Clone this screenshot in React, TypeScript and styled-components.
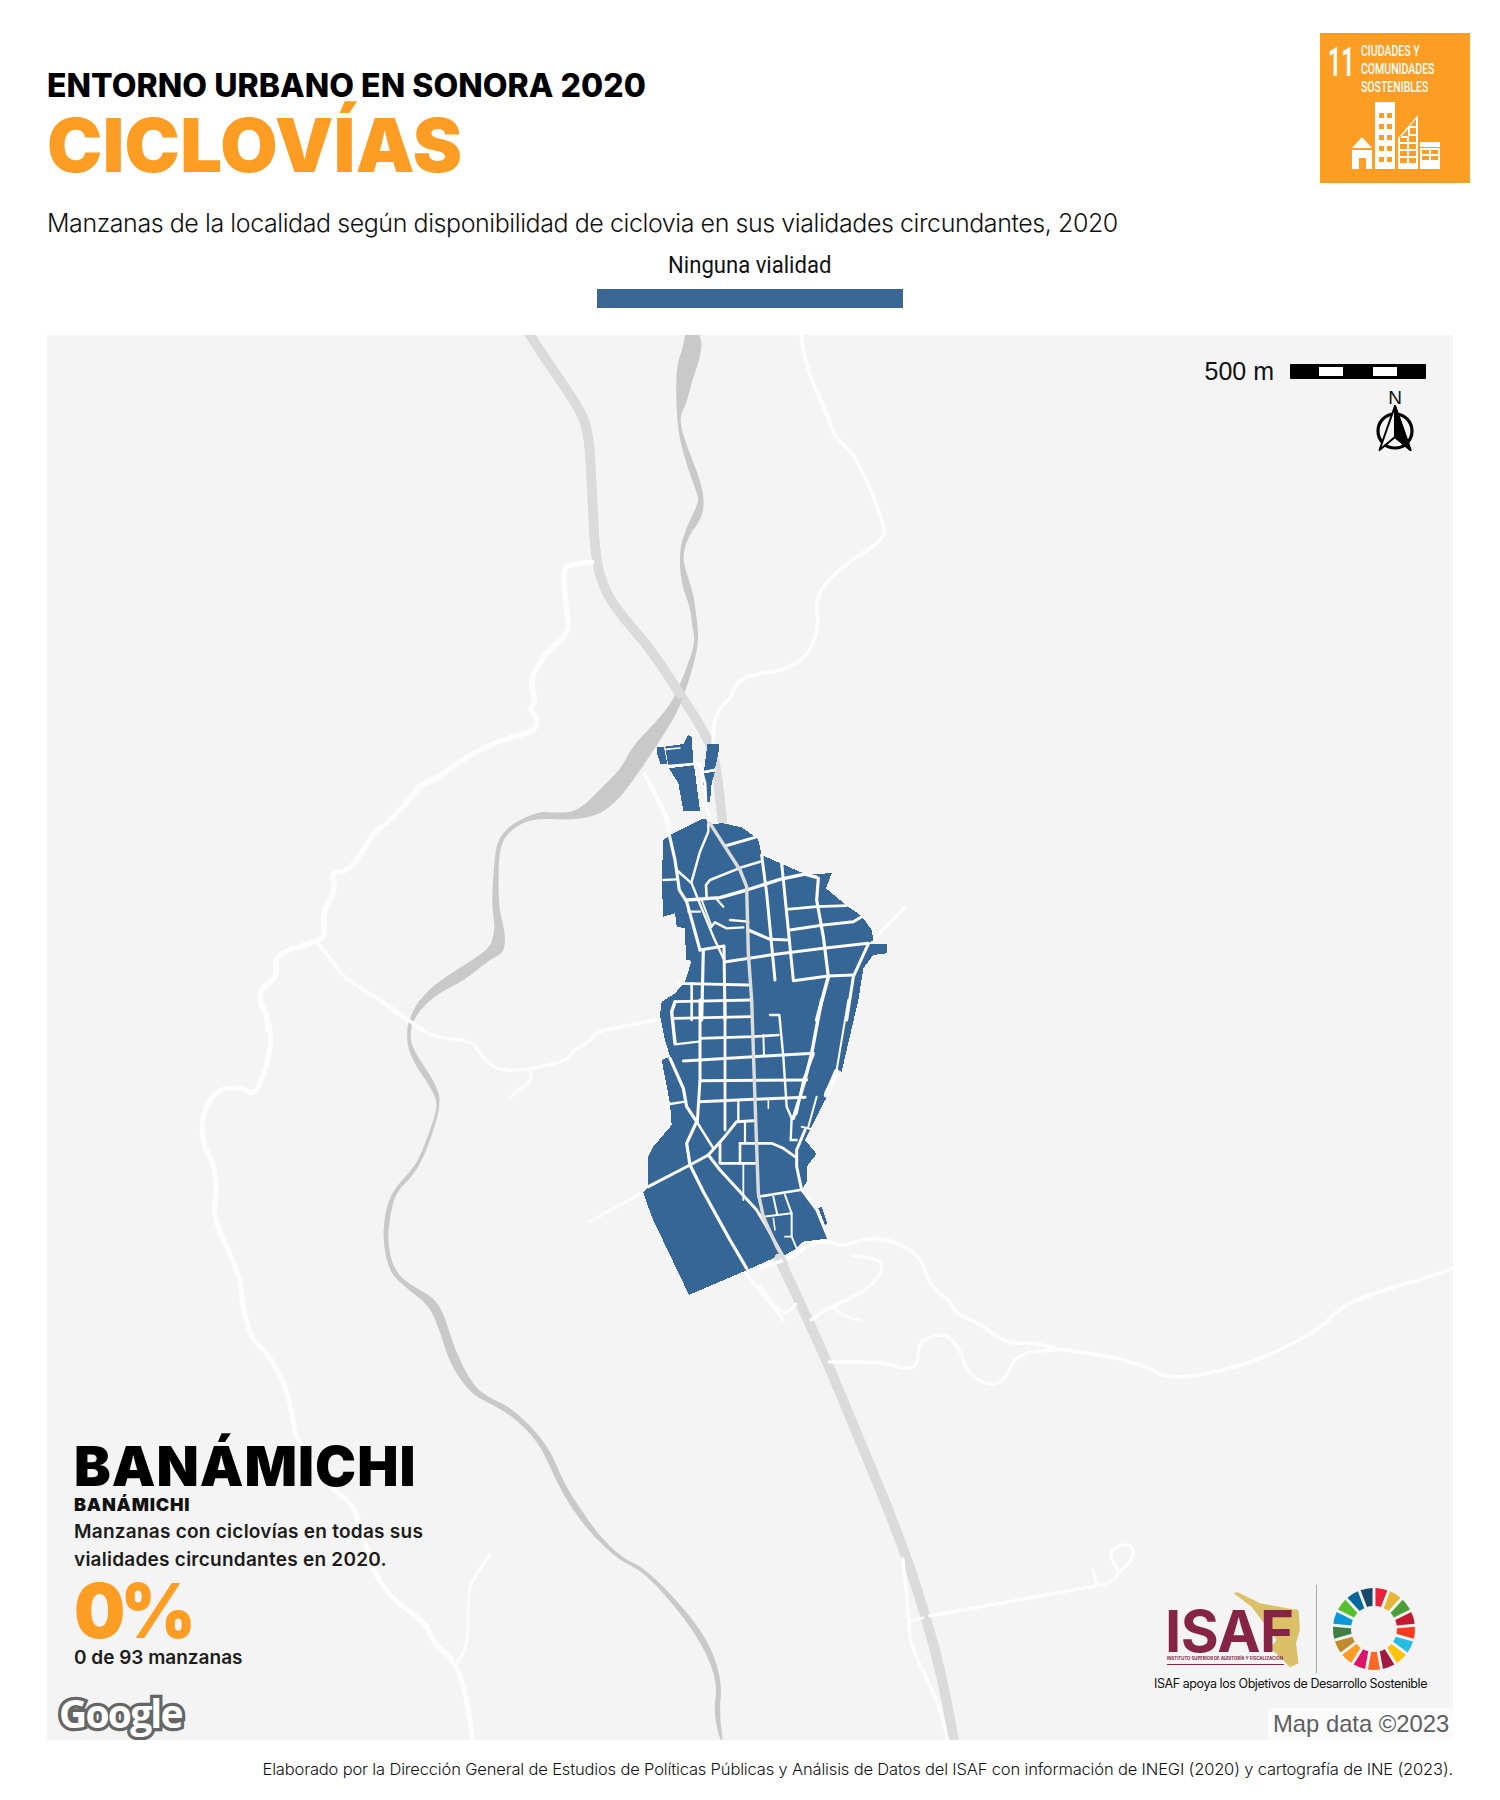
import React from "react";
import styled, { createGlobalStyle } from "styled-components";

const Global = createGlobalStyle`
  html, body { margin: 0; padding: 0; background: #fff; }
`;

const Page = styled.div`
  width: 1500px;
  height: 1800px;
  box-sizing: border-box;
  padding: 33px 0 0 47px;
  background: #fff;
  font-family: Inter, "Liberation Sans", sans-serif;
  color: #111;
  overflow: hidden;
`;
const Header = styled.header`
  display: flex;
  justify-content: space-between;
  align-items: flex-start;
  width: 1423px;
  height: 175px;
`;
const TitleBlock = styled.div`
  display: flex;
  flex-direction: column;
  padding-top: 33px;
`;
const Kicker = styled.h2`
  margin: 0;
  font-size: 32px;
  line-height: 40px;
  font-weight: 800;
  letter-spacing: 0.05px;
  color: #000;
`;
const Headline = styled.h1`
  margin: 0;
  font-size: 74px;
  line-height: 78px;
  font-weight: 900;
  letter-spacing: 0.35px;
  color: #fd9d24;
`;
const Badge = styled.div`
  width: 150px;
  height: 150px;
  background: #fd9d24;
  color: #fff;
  box-sizing: border-box;
  padding: 9px 0 0 8px;
  display: flex;
  flex-direction: column;
`;
const BadgeTop = styled.div`
  display: flex;
  gap: 11px;
  height: 56px;
`;
const BadgeNumber = styled.div`
  font-family: Roboto, sans-serif;
  font-weight: 700;
  font-size: 41px;
  line-height: 40px;
  width: 22px;
  transform-origin: left top;
  transform: scaleX(0.56);
`;
const BadgeWords = styled.div`
  font-family: Roboto, sans-serif;
  font-weight: 500;
  font-size: 15px;
  line-height: 18px;
  white-space: nowrap;
  transform-origin: left top;
  transform: scaleX(0.7);
`;
const BadgeIcon = styled.svg`
  display: block;
  width: 90px;
  height: 68px;
  margin: 3px 0 0 23px;
`;
const Subtitle = styled.p`
  margin: 0;
  font-size: 25px;
  line-height: 30px;
  font-weight: 300;
  letter-spacing: -0.43px;
  color: #111;
  height: 41px;
`;
const Legend = styled.div`
  width: 1406px;
  display: flex;
  flex-direction: column;
  align-items: center;
  height: 86px;
`;
const LegendLabel = styled.div`
  font-family: Roboto, sans-serif;
  font-size: 24px;
  line-height: 32px;
  font-weight: 400;
  color: #111;
  margin-bottom: 8px;
  transform: scaleX(0.92);
  white-space: nowrap;
`;
const LegendBar = styled.div`
  width: 306px;
  height: 19px;
  background: #3a6794;
`;
const MapPanel = styled.div`
  position: relative;
  width: 1406px;
  height: 1405px;
  background: #f4f4f4;
  overflow: hidden;
`;
const MapSvg = styled.svg`
  display: block;
  width: 1406px;
  height: 1405px;
`;
const Stroke = styled.path<{ $w: number; $c: string }>`
  fill: none;
  stroke: ${(p) => p.$c};
  stroke-width: ${(p) => p.$w}px;
  stroke-linecap: round;
  stroke-linejoin: round;
  vector-effect: non-scaling-stroke;
`;
const Area = styled.path<{ $c: string; $crisp?: boolean }>`
  fill: ${(p) => p.$c};
  shape-rendering: ${(p) => (p.$crisp ? "crispEdges" : "auto")};
`;
const ScaleBlock = styled.div`
  position: absolute;
  top: 22px;
  right: 27px;
  display: flex;
  flex-direction: column;
  align-items: flex-end;
`;
const ScaleRow = styled.div`
  display: flex;
  align-items: center;
  gap: 16px;
`;
const ScaleText = styled.span`
  font-family: "Liberation Sans", Arial, sans-serif;
  font-size: 25px;
  line-height: 28px;
  color: #111;
`;
const ScaleBar = styled.div`
  width: 136px;
  height: 15px;
  background: #000;
  border-radius: 1px;
  box-sizing: border-box;
  display: flex;
  align-items: center;
  padding-left: 29px;
  gap: 30px;
`;
const ScaleGap = styled.span`
  width: 24px;
  height: 9px;
  background: #fff;
`;
const NorthArrow = styled.div`
  margin: 6px 11px 0 0;
  width: 40px;
  display: flex;
  flex-direction: column;
  align-items: center;
`;
const NorthLetter = styled.span`
  font-family: "Liberation Sans", Arial, sans-serif;
  font-size: 19px;
  line-height: 14px;
  color: #111;
`;
const Locality = styled.div`
  position: absolute;
  left: 27px;
  top: 1100px;
  display: flex;
  flex-direction: column;
`;
const LocalityBig = styled.div`
  font-size: 55px;
  line-height: 62px;
  font-weight: 900;
  color: #000;
  letter-spacing: 1px;
`;
const LocalitySmall = styled.div`
  font-size: 18px;
  line-height: 20px;
  font-weight: 900;
  color: #111;
  margin-top: -2px;
  letter-spacing: 0.8px;
`;
const LocalityDesc = styled.div`
  font-size: 19px;
  line-height: 28px;
  font-weight: 600;
  color: #1c1c1c;
  width: 380px;
  margin-top: 3px;
  letter-spacing: 0.25px;
`;
const Percent = styled.div`
  font-size: 76px;
  line-height: 72px;
  font-weight: 900;
  color: #fd9d24;
  letter-spacing: -5px;
  transform-origin: left center;
  transform: scaleX(0.95);
`;
const LocalityCount = styled.div`
  font-size: 19px;
  line-height: 24px;
  font-weight: 600;
  color: #1c1c1c;
`;
const GoogleMark = styled.div`
  position: absolute;
  left: 12px;
  bottom: 5px;
  font-family: "Open Sans", sans-serif;
  font-weight: 700;
  font-size: 39px;
  line-height: 44px;
  letter-spacing: -1.8px;
  color: #fff;
  -webkit-text-stroke: 6.5px #666;
  paint-order: stroke fill;
`;
const MapData = styled.div`
  position: absolute;
  right: 0;
  bottom: 0;
  width: 185px;
  height: 32px;
  box-sizing: border-box;
  padding-left: 5px;
  background: #fbfbfb;
  font-family: "Liberation Sans", Arial, sans-serif;
  font-size: 23.8px;
  line-height: 32px;
  color: #5e5e5e;
  white-space: nowrap;
`;
const LogoBlock = styled.div`
  position: absolute;
  left: 1107px;
  top: 1250px;
  width: 280px;
  display: flex;
  flex-direction: column;
`;
const LogoRow = styled.div`
  display: flex;
  align-items: flex-start;
  height: 88px;
`;
const IsafMark = styled.div`
  position: relative;
  width: 149px;
  height: 88px;
  padding-left: 11px;
  box-sizing: border-box;
`;
const IsafState = styled.svg`
  position: absolute;
  left: 0;
  top: 0;
  width: 149px;
  height: 88px;
`;
const IsafName = styled.div`
  position: relative;
  font-family: Inter, sans-serif;
  font-size: 58px;
  line-height: 42px;
  margin-top: 25px;
  font-weight: 700;
  letter-spacing: -0.6px;
  color: #862445;
`;
const IsafFull = styled.div`
  position: relative;
  font-size: 4.3px;
  line-height: 6px;
  margin: 4px 0 0 2px;
  width: 117px;
  font-weight: 700;
  white-space: nowrap;
  color: #862445;
  border-bottom: 1px solid #862445;
  padding-bottom: 2px;
`;
const LogoDivider = styled.div`
  width: 1px;
  height: 88px;
  background: #aaa;
  margin: 0 15px 0 13px;
`;
const Wheel = styled.svg`
  width: 84px;
  height: 84px;
  margin-top: 2px;
`;
const LogoCaption = styled.div`
  font-size: 12.5px;
  line-height: 18px;
  font-weight: 400;
  letter-spacing: -0.43px;
  margin-top: 2px;
  color: #111;
  white-space: nowrap;
`;
const Footer = styled.footer`
  width: 1406px;
  text-align: right;
  font-size: 16.5px;
  line-height: 20px;
  margin-top: 19px;
  font-weight: 300;
  letter-spacing: -0.16px;
  color: #111;
  white-space: nowrap;
`;

type P = [number, number];
const parse = (s: string): P[] =>
  s.trim().split(/\s+/).map((t) => t.split(",").map(Number) as P);
const line = (s: string) =>
  parse(s).map((p, i) => `${i ? "L" : "M"}${p[0]} ${p[1]}`).join(" ");
const poly = (s: string) => line(s) + " Z";
const smooth = (s: string) => {
  const p = parse(s);
  let d = `M${p[0][0]} ${p[0][1]}`;
  for (let i = 1; i < p.length - 1; i++) {
    const mx = (p[i][0] + p[i + 1][0]) / 2;
    const my = (p[i][1] + p[i + 1][1]) / 2;
    d += ` Q${p[i][0]} ${p[i][1]} ${mx} ${my}`;
  }
  const l = p[p.length - 1];
  return d + ` L${l[0]} ${l[1]}`;
};

const ROAD = "#fdfdfd";
const TOWN_ROAD = "#fbfbfb";
const HWY = "#dbdbdb";
const RIVER = "#c9c9c9";
const BLUE = "#366695";

const riverUpper =
  "1087,10 1082,40 1070,70 1066,120 1068,190 1074,245 1093,310 1113,365 1118,385 1090,440 1073,495 1078,570 1098,620 1102,660 1110,700 1085,770 1060,830 1020,880 970,930 945,980 905,1020 848,1078 800,1082 760,1078 700,1105 672,1135 661,1165 653,1285 660,1330 658,1355 648,1388 540,1455 500,1490 470,1540 463,1568 470,1568 480,1540 510,1505 545,1480 590,1458 650,1410 682,1395 684,1350 670,1300 668,1220 672,1155 695,1120 745,1093 820,1098 885,1090 930,1060 970,1010 1040,905 1075,845 1100,770 1118,700 1112,640 1105,590 1085,530 1082,500 1095,460 1125,420 1130,375 1115,320 1090,260 1072,198 1090,165 1100,120 1118,70 1125,30 1118,10";
const riverLower =
  "492,0 470,30 461,85 478,130 515,180 533,215 522,255 492,330 470,360 430,400 413,450 410,510 425,570 465,605 515,640 540,700 560,760 600,815 630,835 695,865 760,925 795,1000 830,1060 880,1120 940,1172 1000,1198 1110,1320 1160,1420 1150,1490 1165,1548 1172,1548 1163,1490 1170,1420 1130,1320 1005,1192 945,1166 890,1115 850,1060 815,1010 780,930 700,852 635,826 605,795 570,730 548,660 525,622 470,595 435,565 420,510 425,450 440,400 480,365 510,310 542,215 525,170 485,115 470,85 475,45 510,0";

const upperRoads: [string, number][] = [
  ["878,520 830,525 813,535 820,620 828,680 780,715 745,770 742,795 752,835 735,848 758,870 750,900 670,918 590,960 530,1005 490,1020 480,1040 420,1105 390,1125 370,1160 335,1210 300,1215 295,1225 305,1255 275,1300 280,1360 262,1370 165,1397 175,1450 135,1475 135,1510 150,1535 152,1568", 5.2],
  ["262,1372 295,1410 320,1450 420,1510 465,1545 500,1568", 3.6],
  ["1347,10 1352,75 1410,200 1420,240 1470,280 1535,440 1530,470 1460,515 1405,560 1378,610 1387,655 1365,730 1300,765 1240,770 1200,790 1190,825 1165,845 1150,880 1150,925", 3.8],
  ["995,995 1045,1090 1050,1130", 3.4],
];
const lowerRoads: [string, number][] = [
  ["135,0 155,40 160,105 130,190 110,195 95,183 40,185 5,235 5,300 30,340 38,400 28,455 90,575 95,640 115,710 150,735 195,810 210,890 215,915 290,1020 340,1050 360,1100 400,1230 510,1305 520,1340 575,1385 600,1470 610,1548", 5],
  ["575,1385 600,1360 600,1250 610,1210 650,1160", 3.2],
  ["400,0 465,45 520,78 610,85 625,110 670,155 820,130 835,105 870,90 890,65 950,55 1030,40", 3.4],
  ["740,150 745,170 715,185 695,205", 3],
  ["872,464 992,402", 3],
];
const rightRoads: [string, number][] = [
  ["0,400 40,385 80,370 110,340 160,335 180,350 260,320 360,365 378,440 430,480 435,505 490,530 555,580 610,575 670,593 800,610 880,640 900,655 960,660 1100,625 1180,585 1260,540 1300,490 1400,450 1470,430 1552,400", 3.8],
  ["205,370 270,375 275,410 230,460 160,490 115,522", 3.4],
  ["160,490 195,518 225,522", 3],
  ["0,440 50,520 80,485", 3],
  ["155,622 270,620 330,642 355,625 355,575 400,555 430,565 455,610 460,640 500,675 545,675 575,600 670,593", 3.4],
  ["380,1225 750,1155 790,1145 805,1120 838,1090 832,1050 778,1070 800,1115", 3.4],
  ["745,1115 755,1150", 3],
  ["320,1090 335,1240 335,1290 400,1430 420,1520", 3.4],
  ["335,1238 365,1230", 3],
];

const townUpper = [
  "110,82 132,80 142,132 122,132 112,105",
  "135,80 190,72 205,45 215,50 220,128 145,138",
  "262,73 298,73 295,100 285,145 252,155",
  "250,160 285,155 275,190 270,245 258,245 250,190",
  "147,145 222,135 228,180 240,272 190,272 175,190",
];
const townBody =
  "150,345 245,297 258,297 265,312 310,310 365,322 405,350 415,360 425,405 555,462 635,460 618,505 680,557 725,588 755,630 760,660 745,672 800,672 800,700 760,705 730,745 715,840 665,1055 645,1052 612,1120 625,1122 570,1230 555,1260 590,1302 560,1340 560,1385 545,1410 590,1470 625,1555 550,1565 530,1585 490,1608 470,1600 460,1615 370,1655 207,1725 95,1490 70,1418 85,1400 85,1310 100,1280 155,1215 150,1150 125,1020 150,1010 135,960 120,885 125,845 165,820 195,785 215,722 198,720 195,625 170,620 165,580 130,590 125,480 130,360";
const townStrip = "595,1465 605,1460 622,1512 615,1515";

const z3Streets: [string, number][] = [
  ["148,305 148,345 165,420 178,510 200,545 240,690", 3.2],
  ["265,310 265,335 240,395 215,485", 2.4],
  ["170,450 215,490 235,540 280,650 310,715", 2.4],
  ["130,480 170,478", 2.4],
  ["200,540 300,533 380,510 480,478 555,462 590,472", 3.4],
  ["260,535 258,495 270,480 370,440 420,425", 2.6],
  ["315,378 405,352", 3],
  ["425,405 440,520 465,780", 3],
  ["485,430 520,780", 3],
  ["500,568 590,560 680,557", 2.6],
  ["510,630 610,615 700,605 725,590", 3],
  ["595,475 590,540 610,650 625,770", 3.2],
  ["520,782 625,768 700,765", 3],
  ["318,725 450,705 610,685 745,670", 3],
  ["385,630 450,658 505,660", 3],
  ["330,600 385,605", 2.4],
  ["270,625 285,607 320,625 370,622", 2.4],
  ["205,575 240,575", 2.2],
  ["245,540 275,620", 2],
  ["290,538 310,560", 2.2],
  ["240,690 312,678 315,900", 3],
  ["250,690 245,900", 3.2],
  ["172,790 385,795", 2.8],
  ["165,845 395,840", 2.8],
  ["215,790 215,900", 2.6],
  ["745,672 700,770 680,900", 3],
  ["625,770 590,900", 3.6],
  ["135,88 180,84", 1.6],
  ["222,132 240,135 255,190 258,260 270,300", 3],
  ["145,138 222,132", 2.6],
  ["255,155 285,150", 2.4],
];
const z4Streets: [string, number][] = [
  ["165,5 155,35 165,130", 3.4],
  ["150,175 190,265 200,320 230,365", 3.2],
  ["230,365 200,430 210,495 250,575 330,720 380,805", 3.2],
  ["230,365 280,445", 2.6],
  ["240,0 240,240 232,365", 3],
  ["315,0 315,300 315,390", 2.8],
  ["165,55 395,50", 2.8],
  ["240,115 400,110 475,105", 2.6],
  ["165,133 235,125", 2.4],
  ["190,183 400,170 580,160", 3],
  ["240,242 560,240", 3],
  ["240,305 400,298 555,292", 3],
  ["150,312 195,305", 2.4],
  ["85,560 210,495 265,465 310,415 350,365 400,362", 3],
  ["265,465 300,510 410,630 440,680 490,770", 3],
  ["300,430 300,490 405,490", 2.8],
  ["360,430 360,490", 2.6],
  ["360,430 455,430 490,445 525,470", 2.8],
  ["370,490 370,600", 1.8],
  ["355,305 355,360", 2.4],
  ["375,365 375,425", 2.2],
  ["415,590 540,570", 2.6],
  ["460,590 472,645", 2],
  ["495,585 515,640", 2],
  ["430,650 515,640 515,710", 2],
  ["495,710 515,710 530,745", 1.8],
  ["460,655 465,690", 1.6],
  ["545,570 590,630 625,715", 2.6],
  ["430,105 432,165", 2],
  ["450,45 478,45 490,170 500,320 515,355 530,340 550,240 580,165", 2.4],
  ["515,355 512,420 530,420", 2.4],
  ["445,300 445,325", 1.6],
  ["545,380 575,388", 2],
  ["605,0 575,160 555,240 540,290 520,355", 3.4],
  ["685,0 650,210", 2],
  ["590,290 565,380", 2],
  ["555,390 530,450 530,500 545,570", 3],
  ["650,215 620,285", 5.5],
];

const WHEEL = ["#e5243b", "#e5b735", "#4c9f38", "#c5192d", "#ff3a21", "#26bde2", "#fcc30b", "#a21942", "#fd6925", "#dd1367", "#fd9d24", "#bf8b2e", "#3f7e44", "#0a97d9", "#56c02b", "#00689d", "#19486a"];
const wedge = (i: number) => {
  const step = (2 * Math.PI) / 17;
  const a0 = i * step + 0.035;
  const a1 = (i + 1) * step - 0.035;
  const R = 41;
  const r = 23;
  const pt = (rad: number, a: number) => `${(42 + rad * Math.sin(a)).toFixed(2)} ${(42 - rad * Math.cos(a)).toFixed(2)}`;
  const b = 0.03;
  return `M${pt(r, a0 + b)} L${pt(R, a0)} A${R} ${R} 0 0 1 ${pt(R, a1)} L${pt(r, a1 - b)} A${r} ${r} 0 0 0 ${pt(r, a0 + b)} Z`;
};

export default function App() {
  return (
    <Page>
      <Global />
      <Header>
        <TitleBlock>
          <Kicker>ENTORNO URBANO EN SONORA 2020</Kicker>
          <Headline>CICLOVÍAS</Headline>
        </TitleBlock>
        <Badge>
          <BadgeTop>
            <BadgeNumber>11</BadgeNumber>
            <BadgeWords>
              CIUDADES Y
              <br />
              COMUNIDADES
              <br />
              SOSTENIBLES
            </BadgeWords>
          </BadgeTop>
          <BadgeIcon viewBox="0 0 90 68">
            <path fill="#fff" d="M1 47 L11 36 L21 47 Z M1 49 H21 V68 H15 V57 H8 V68 H1 Z M24 1 H44 V68 H24 Z M47 68 V37 L67 14 V68 Z M69 41 H89 V46 H69 Z M69 47 H89 V68 H69 Z" />
            <path fill="#fd9d24" d="M28 12 h5 v5 h-5z M36 12 h5 v5 h-5z M28 23 h5 v5 h-5z M36 23 h5 v5 h-5z M28 34 h5 v5 h-5z M36 34 h5 v5 h-5z M28 45 h5 v5 h-5z M36 45 h5 v5 h-5z M28 56 h5 v5 h-5z M36 56 h5 v5 h-5z" />
            <path fill="#fd9d24" d="M49 37 L57 28 V35 H49 Z M59 25 L65 18 V25 Z M59 27 h6 v6 h-6z M49 37 h7 v4 h-7z M58 35 h7 v6 h-7z M49 43 h7 v5 h-7z M58 43 h7 v5 h-7z M49 50 h7 v5 h-7z M58 50 h7 v5 h-7z M49 57 h7 v5 h-7z M58 57 h7 v5 h-7z" />
            <path fill="#fd9d24" d="M71 49 h7 v4 h-7z M80 49 h7 v4 h-7z M71 55 h7 v4 h-7z M80 55 h7 v4 h-7z" />
          </BadgeIcon>
        </Badge>
      </Header>
      <Subtitle>Manzanas de la localidad según disponibilidad de ciclovia en sus vialidades circundantes, 2020</Subtitle>
      <Legend>
        <LegendLabel>Ninguna vialidad</LegendLabel>
        <LegendBar />
      </Legend>
      <MapPanel>
        <MapSvg viewBox="47 335 1406 1405">
          <g transform="translate(200 1000) scale(0.44643 0.47847)">
            <Area $c={RIVER} d={smooth(riverLower) + " Z"} />
            {lowerRoads.map(([d, w], i) => (
              <Stroke key={i} d={smooth(d)} $w={w} $c={ROAD} />
            ))}
          </g>
          <g transform="translate(200 330) scale(0.44643)">
            <Stroke d={smooth("735,5 770,60 840,160 870,220 878,350 885,510 905,580 940,635 1010,715 1075,815 1130,900 1155,960 1170,1100")} $w={9.5} $c={HWY} />
            <Area $c={RIVER} d={smooth(riverUpper) + " Z"} />
            <Stroke d={smooth("735,5 770,60 840,160 870,220 878,350 885,510 905,580 940,635 1010,715 1075,815")} $w={9.5} $c={HWY} />
            {upperRoads.map(([d, w], i) => (
              <Stroke key={i} d={smooth(d)} $w={w} $c={ROAD} />
            ))}
          </g>
          <g transform="translate(760 1100) scale(0.44643 0.42105)">
            <Stroke d={smooth("40,370 130,570 220,800 310,1030 370,1220 410,1380 435,1525")} $w={10} $c={HWY} />
            {rightRoads.map(([d, w], i) => (
              <Stroke key={i} d={smooth(d)} $w={w} $c={ROAD} />
            ))}
          </g>
          <g transform="translate(620 720) scale(0.33333)">
            <Stroke d={line("760,660 855,562")} $w={3.6} $c={ROAD} />
            <Stroke d={line("75,160 148,305")} $w={3.6} $c={ROAD} />
            <Stroke d={line("370,1650 490,1800")} $w={3.4} $c={ROAD} />
            {townUpper.map((d, i) => (
              <Area key={i} d={poly(d)} $c={BLUE} $crisp />
            ))}
            <Area d={poly(townBody)} $c={BLUE} $crisp />
            <Area d={poly(townStrip)} $c={BLUE} $crisp />
            {z3Streets.map(([d, w], i) => (
              <Stroke key={i} d={line(d)} $w={w} $c={TOWN_ROAD} />
            ))}
            <g transform="translate(0 840)">
              {z4Streets.map(([d, w], i) => (
                <Stroke key={i} d={line(d)} $w={w} $c={TOWN_ROAD} />
              ))}
            </g>
            <Stroke d={line("270,310 360,450 380,500 385,700 395,840 405,1140 415,1420 430,1490 470,1580 500,1630")} $w={3.4} $c="#dcdcdc" />
          </g>
        </MapSvg>
        <ScaleBlock>
          <ScaleRow>
            <ScaleText>500 m</ScaleText>
            <ScaleBar>
              <ScaleGap />
              <ScaleGap />
            </ScaleBar>
          </ScaleRow>
          <NorthArrow>
            <NorthLetter>N</NorthLetter>
            <svg width="40" height="46" viewBox="0 0 40 46">
              <circle cx="20" cy="26" r="17" fill="none" stroke="#000" strokeWidth="3.2" />
              <path d="M20 1 L4.5 45 L20 32 L35.5 45 Z" fill="#f4f4f4" stroke="#000" strokeWidth="2" strokeLinejoin="round" />
              <path d="M20 1 L35.5 45 L20 32 Z" fill="#000" stroke="#000" strokeWidth="2" strokeLinejoin="round" />
            </svg>
          </NorthArrow>
        </ScaleBlock>
        <Locality>
          <LocalityBig>BANÁMICHI</LocalityBig>
          <LocalitySmall>BANÁMICHI</LocalitySmall>
          <LocalityDesc>
            Manzanas con ciclovías en todas sus
            <br />
            vialidades circundantes en 2020.
          </LocalityDesc>
          <Percent>0%</Percent>
          <LocalityCount>0 de 93 manzanas</LocalityCount>
        </Locality>
        <GoogleMark>Google</GoogleMark>
        <LogoBlock>
          <LogoRow>
            <IsafMark>
              <IsafState viewBox="0 0 149 88">
                <path fill="#d9c069" d="M79.6 8.3 L83 7 L106.3 18.3 L133 23.3 L144.6 25 L146 45 L142 58.3 L144.6 78.3 L136 82.3 L126 71.7 L116 63.3 L122.6 55 L112.6 41.7 L97.6 21.7 Z" />
              </IsafState>
              <IsafName>ISAF</IsafName>
              <IsafFull>INSTITUTO SUPERIOR DE AUDITORÍA Y FISCALIZACIÓN</IsafFull>
            </IsafMark>
            <LogoDivider />
            <Wheel viewBox="0 0 84 84">
              {WHEEL.map((c, i) => (
                <path key={c} d={wedge(i)} fill={c} />
              ))}
            </Wheel>
          </LogoRow>
          <LogoCaption>ISAF apoya los Objetivos de Desarrollo Sostenible</LogoCaption>
        </LogoBlock>
        <MapData>Map data ©2023</MapData>
      </MapPanel>
      <Footer>
        Elaborado por la Dirección General de Estudios de Políticas Públicas y Análisis de Datos del ISAF con información de INEGI (2020) y cartografía de INE (2023).
      </Footer>
    </Page>
  );
}
